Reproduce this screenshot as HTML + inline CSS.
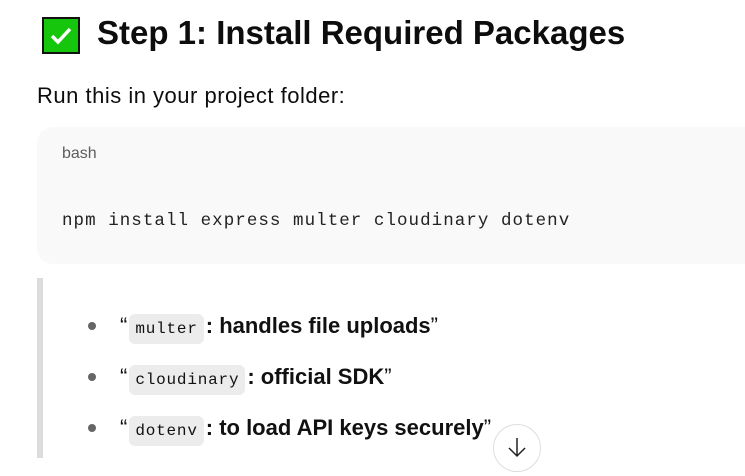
<!DOCTYPE html>
<html><head><meta charset="utf-8"><style>
body{margin:0;width:745px;height:453px;overflow:hidden;background:#fff;font-family:"Liberation Sans",sans-serif;color:#0d0d0d;position:relative}
.a{position:absolute;white-space:nowrap}
.chk{left:42px;top:17px;background:#16c60c;border:2px solid #111;box-sizing:border-box;width:38px;height:37px}
h1{margin:0;font-size:33px;font-weight:bold;left:97px;top:14px}
.p{left:37px;top:83px;font-size:22px;letter-spacing:0.5px}
.code{left:37px;top:127px;width:760px;height:137px;background:#f9f9f9;border-radius:16px}
.lang{left:62px;top:145px;font-size:16px;color:#5d5d5d}
.cmd{left:62px;top:211px;font-family:"Liberation Mono",monospace;font-size:17.5px;letter-spacing:1.05px;color:#222}
.bar{left:37px;top:278px;width:6px;height:180px;background:#dcdcdc}
.li{left:120px;font-size:22px;font-weight:bold;color:#111}
.li .q{font-weight:normal}
.dot{left:88px;width:8px;height:8px;border-radius:50%;background:#666}
code{font-family:"Liberation Mono",monospace;font-weight:normal;font-size:16px;letter-spacing:0.8px;background:#ececec;border-radius:6px;padding:6px 6px;margin:0 2px}
.btn{left:493px;top:424px;width:46px;height:46px;border-radius:50%;border:1px solid #ddd;background:#fff}
</style></head><body>
<div class="a chk"><svg width="34" height="33" viewBox="0 0 34 33"><path d="M8 17 L14 23 L26 10" stroke="#fff" stroke-width="3.5" fill="none"/></svg></div>
<h1 class="a">Step 1: Install Required Packages</h1>
<div class="a p">Run this in your project folder:</div>
<div class="a code"></div>
<div class="a lang">bash</div>
<div class="a cmd">npm install express multer cloudinary dotenv</div>
<div class="a bar"></div>
<div class="a dot" style="top:322px"></div>
<div class="a li" style="top:313px"><span class="q">“</span><code>multer</code>: handles file uploads<span class="q">”</span></div>
<div class="a dot" style="top:373px"></div>
<div class="a li" style="top:364px"><span class="q">“</span><code>cloudinary</code>: official SDK<span class="q">”</span></div>
<div class="a dot" style="top:424px"></div>
<div class="a li" style="top:415px"><span class="q">“</span><code>dotenv</code>: to load API keys securely<span class="q">”</span></div>
<div class="a btn"><svg width="46" height="46"><path d="M23 13 V30 M15 23 L23 31 L31 23" stroke="#222" stroke-width="1.5" fill="none"/></svg></div>
</body></html>
